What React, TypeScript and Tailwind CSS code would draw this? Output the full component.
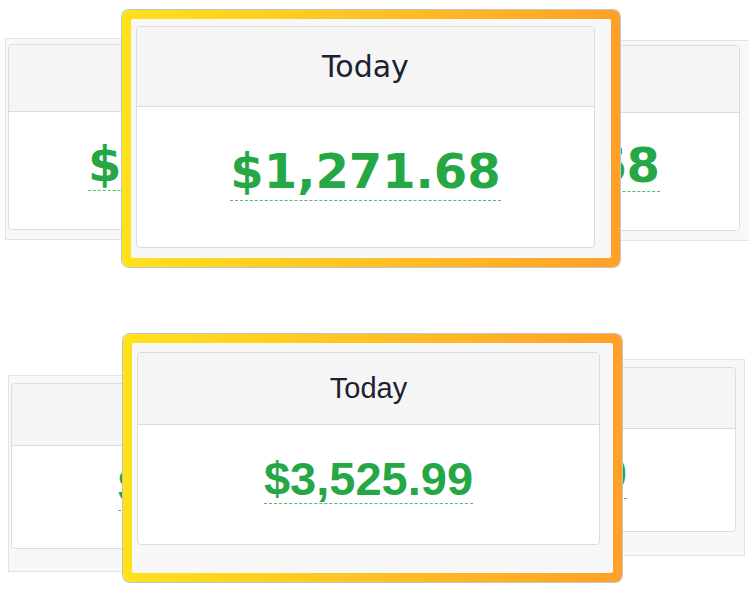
import React from "react";

interface StatCardProps {
  title?: string;
  amount: string;
  className?: string;
  headerClass: string;
  bodyClass: string;
  amountClass: string;
}

// header (grey strip with the label) + body (big green amount with dashed underline)
function StatCard({ title, amount, className = "", headerClass, bodyClass, amountClass }: StatCardProps) {
  return (
    <div className={`shrink-0 rounded-[4px] border border-[#dcdcdc] bg-white overflow-hidden ${className}`}>
      <div className={`flex items-center justify-center bg-[#f5f5f5] border-b border-[#dcdcdc] text-[#1c2130] ${headerClass}`}>
        {title && <span>{title}</span>}
      </div>
      <div className={`flex items-start ${bodyClass}`}>
        <span
          className={`inline-block whitespace-nowrap font-bold text-[#26a745] border-b border-dashed border-[#4fbf6a] ${amountClass}`}
        >
          {amount}
        </span>
      </div>
    </div>
  );
}

export default function App() {
  return (
    <div className="w-[749px] h-[599px] overflow-hidden bg-white">
      {/* first strip: cards behind, highlighted one on top */}
      <section className="relative h-[290px] font-['DejaVu_Sans',Verdana,sans-serif]">
        <div className="flex items-start">
          <div className="shrink-0 ml-[5px] mt-[38px] w-[440px] border border-[#e3e3e3] bg-[#f8f8f8] pl-[2px] pr-[6px] pt-[5px] pb-[9px]">
            <StatCard
              amount="$1"
              className="w-[430px]"
              headerClass="h-[67px]"
              bodyClass="h-[117px] pt-[26px] justify-start pl-[79px]"
              amountClass="text-[48px] leading-[52px]"
            />
          </div>
          <div className="shrink-0 ml-[-145px] mt-[40px] w-[450px] border border-[#e3e3e3] bg-[#f8f8f8] px-[9px] pt-[4px] pb-[9px]">
            <StatCard
              amount="68"
              className="w-[430px]"
              headerClass="h-[67px]"
              bodyClass="h-[117px] pt-[26px] justify-end pr-[79px]"
              amountClass="text-[48px] leading-[52px]"
            />
          </div>
        </div>

        <div className="absolute left-[122px] top-[10px] w-[498px] h-[257px] p-[9px] rounded-[7px] bg-linear-to-r from-[#ffe21a] to-[#ffa027] shadow-[0_0_0_1px_#c4c4c4]">
          <div className="h-full rounded-[2px] bg-[#f8f8f8] pl-[5px] pt-[7px]">
            <StatCard
              title="Today"
              amount="$1,271.68"
              className="w-[459px]"
              headerClass="h-[80px] text-[30px]"
              bodyClass="h-[140px] pt-[35px] justify-center"
              amountClass="text-[48px] leading-[58px]"
            />
          </div>
        </div>
      </section>

      {/* second strip */}
      <section className="relative h-[309px] font-['Liberation_Sans',Arial,sans-serif]">
        <div className="flex items-start">
          <div className="shrink-0 ml-[8px] mt-[85px] w-[428px] border border-[#e3e3e3] bg-[#f8f8f8] pl-[2px] pr-[6px] pt-[7px] pb-[22px]">
            <StatCard
              amount="$3"
              className="w-[418px]"
              headerClass="h-[62px]"
              bodyClass="h-[102px] pt-[16px] justify-start pl-[106px]"
              amountClass="text-[47px] leading-[48px]"
            />
          </div>
          <div className="shrink-0 ml-[-131px] mt-[69px] w-[440px] border border-[#e3e3e3] bg-[#f8f8f8] px-[8px] pt-[7px] pb-[23px]">
            <StatCard
              amount="99"
              className="w-[422px]"
              headerClass="h-[61px]"
              bodyClass="h-[102px] pt-[21px] justify-end pr-[108px]"
              amountClass="text-[47px] leading-[48px]"
            />
          </div>
        </div>

        <div className="absolute left-[123px] top-[44px] w-[499px] h-[248px] p-[9px] rounded-[7px] bg-linear-to-r from-[#ffe21a] to-[#ffa027] shadow-[0_0_0_1px_#c4c4c4]">
          <div className="h-full rounded-[2px] bg-[#f8f8f8] pl-[5px] pt-[9px]">
            <StatCard
              title="Today"
              amount="$3,525.99"
              className="w-[463px]"
              headerClass="h-[72px] text-[29px]"
              bodyClass="h-[119px] pt-[30px] justify-center"
              amountClass="text-[47px] leading-[48px]"
            />
          </div>
        </div>
      </section>
    </div>
  );
}
